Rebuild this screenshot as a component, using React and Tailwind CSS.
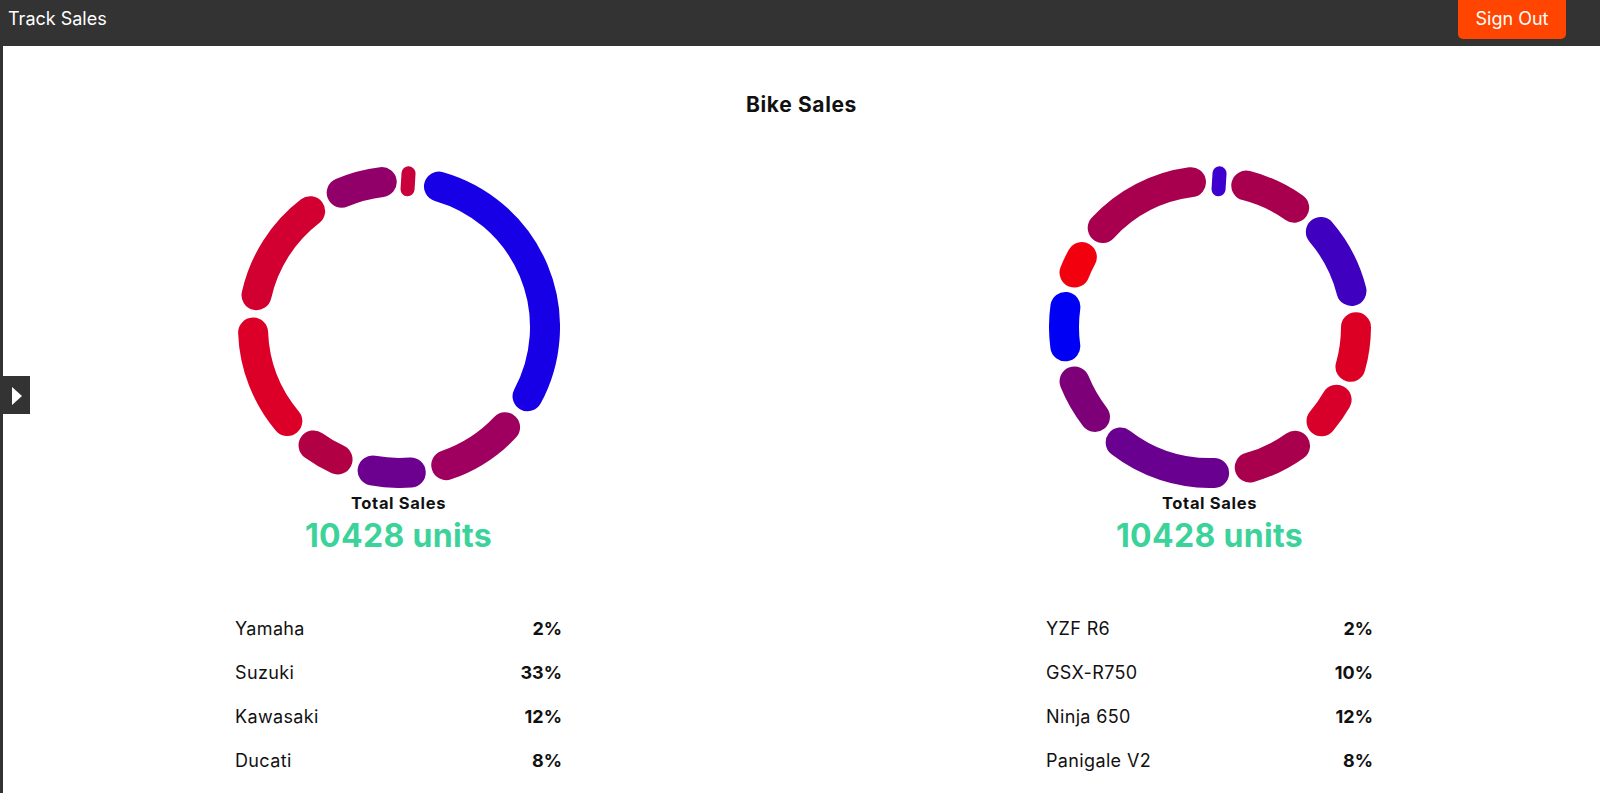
import React from "react";

const C = 161;
const R = 146;
const SW = 30;
const CAP = (15 / R) * (180 / Math.PI);

function pt(deg) {
  const t = (deg * Math.PI) / 180;
  return [C + R * Math.sin(t), C - R * Math.cos(t)];
}

function Segment({ s, e, color }) {
  const len = ((e - s) * Math.PI * R) / 180;
  if (len < SW) {
    const mid = (s + e) / 2;
    const w = len;
    return (
      <rect
        x={C - w / 2}
        y={C - R - SW / 2}
        width={w}
        height={SW}
        rx={w / 2}
        fill={color}
        transform={`rotate(${mid} ${C} ${C})`}
      />
    );
  }
  const a = s + CAP;
  const b = e - CAP;
  const [x1, y1] = pt(a);
  const [x2, y2] = pt(b);
  const large = b - a > 180 ? 1 : 0;
  return (
    <path
      d={`M ${x1} ${y1} A ${R} ${R} 0 ${large} 1 ${x2} ${y2}`}
      stroke={color}
      strokeWidth={SW}
      strokeLinecap="round"
      fill="none"
    />
  );
}

function Donut({ segments }) {
  return (
    <svg width="322" height="322" viewBox="0 0 322 322" className="block">
      {segments.map((g, i) => (
        <Segment key={i} {...g} />
      ))}
    </svg>
  );
}

const leftSegs = [
  { s: 0.8, e: 6.3, color: "#c8003c" },
  { s: 10, e: 124.2, color: "#1800e6" },
  { s: 127.5, e: 167, color: "#9f005f" },
  { s: 169.5, e: 196.3, color: "#6c008f" },
  { s: 199, e: 221.7, color: "#b20045" },
  { s: 224, e: 273.7, color: "#dc0028" },
  { s: 276.7, e: 328.4, color: "#d10030" },
  { s: 331, e: 359.1, color: "#910068" },
];

const rightSegs = [
  { s: 0.8, e: 6.3, color: "#3d00cf" },
  { s: 8.5, e: 41.1, color: "#a8004f" },
  { s: 43.5, e: 81.6, color: "#3f00c0" },
  { s: 84.2, e: 111.7, color: "#dc0024" },
  { s: 114, e: 136.1, color: "#d8002a" },
  { s: 138.5, e: 170.1, color: "#a8004c" },
  { s: 172.5, e: 223.6, color: "#6a008f" },
  { s: 226.1, e: 254, color: "#7e0078" },
  { s: 256.5, e: 283.8, color: "#0000f5" },
  { s: 286, e: 304.5, color: "#f2000d" },
  { s: 306.8, e: 358.4, color: "#a8004f" },
];

function Column({ segments, rows }) {
  return (
    <div className="flex w-[327px] flex-col items-center">
      <Donut segments={segments} />
      <div className="mt-[3px] text-[16.5px] font-bold leading-6 tracking-[0.04em] text-[#111]">Total Sales</div>
      <div className="mt-[3px] text-[32px] font-bold leading-[36px] tracking-[0.01em] text-[#3cd39a]">10428 units</div>
      <div className="mt-[53px] w-full">
        {rows.map(([label, pct]) => (
          <div key={label} className="flex h-[44px] items-center justify-between text-[18px] leading-[44px] text-[#111]">
            <span className="tracking-[0.02em]">{label}</span>
            <span className="font-bold">{pct}</span>
          </div>
        ))}
      </div>
    </div>
  );
}

export default function App() {
  return (
    <div
      className="flex min-h-[793px] flex-col bg-white"
      style={{ fontFamily: "Inter, 'Noto Sans', sans-serif" }}
    >
      <header className="flex h-[46px] items-start justify-between bg-[#333333] pl-2 pr-[34px]">
        <div className="pt-[5px] text-[18px] leading-7 text-white">Track Sales</div>
        <button className="flex h-[39px] w-[108px] items-start justify-center rounded-b-[5px] bg-[#ff4500] pt-[5px] text-[18px] leading-7 text-white">
          Sign Out
        </button>
      </header>
      <div className="relative flex flex-1">
        <div className="w-[3px] bg-[#333333]" />
        <main className="flex-1">
          <h1 className="mt-[45px] text-center text-[21px] font-bold leading-7 tracking-[0.03em] text-[#111]">Bike Sales</h1>
          <div className="mt-[47px] flex gap-[484px] pl-[232px]">
            <Column
              segments={leftSegs}
              rows={[
                ["Yamaha", "2%"],
                ["Suzuki", "33%"],
                ["Kawasaki", "12%"],
                ["Ducati", "8%"],
              ]}
            />
            <Column
              segments={rightSegs}
              rows={[
                ["YZF R6", "2%"],
                ["GSX-R750", "10%"],
                ["Ninja 650", "12%"],
                ["Panigale V2", "8%"],
              ]}
            />
          </div>
        </main>
        <button className="absolute left-0 top-[330px] flex h-[38px] w-[30px] items-center bg-[#333333]">
          <svg width="30" height="38" viewBox="0 0 30 38">
            <polygon points="12,11 22,20 12,29" fill="#ffffff" />
          </svg>
        </button>
      </div>
    </div>
  );
}
